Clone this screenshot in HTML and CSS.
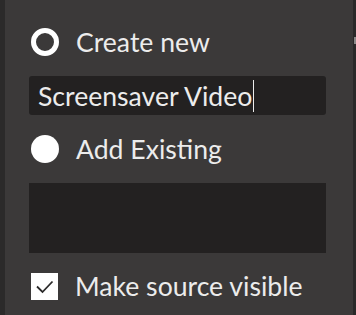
FILE: index.html
```html
<!DOCTYPE html>
<html>
<head>
<meta charset="utf-8">
<link rel="stylesheet" href="styles.css">
</head>
<body>
<div class="frame">
  <div class="edge-left"></div>
  <div class="panel">
    <label class="row row-create">
      <span class="radio radio-off"></span>
      <span class="label">Create new</span>
    </label>
    <div class="input"><span class="value">Screensaver Video</span><span class="caret"></span></div>
    <label class="row row-existing">
      <span class="radio radio-on"></span>
      <span class="label">Add Existing</span>
    </label>
    <div class="list"></div>
    <label class="row row-visible">
      <span class="check">
        <svg width="27" height="27" viewBox="0 0 27 27"><path d="M6 13.5 L11.5 19 L21.5 8.5" fill="none" stroke="#2b2a2a" stroke-width="1.8"/></svg>
      </span>
      <span class="label">Make source visible</span>
    </label>
  </div>
  <div class="edge-right"><span class="thumb"></span></div>
</div>
</body>
</html>
```
FILE: styles.css
```css
html, body {
  margin: 0;
  padding: 0;
  background: #3b3939;
}
.frame {
  display: flex;
  width: 356px;
  height: 315px;
  overflow: hidden;
  font-family: Lato, "Noto Sans", sans-serif;
  color: #ececec;
}
.edge-left {
  width: 5px;
  background: #2b2a2a;
  flex: none;
}
.edge-right {
  width: 3px;
  background: #2a2929;
  flex: none;
  position: relative;
}
.thumb {
  position: absolute;
  left: 1px;
  top: 37px;
  width: 2px;
  height: 7px;
  background: #8a8888;
}
.panel {
  flex: 1;
  padding-left: 24px;
  padding-right: 27px;
  display: flex;
  flex-direction: column;
}
.row {
  display: flex;
  align-items: center;
  height: 28px;
}
.row-create { margin-top: 28px; }
.row-existing { margin-top: 20px; }
.row-visible { margin-top: 19px; }
.label {
  margin-left: 17px;
  font-size: 26.6px;
  line-height: 28px;
  white-space: nowrap;
}
.radio {
  width: 28px;
  height: 28px;
  border-radius: 50%;
  box-sizing: border-box;
  margin-left: 2px;
  flex: none;
}
.radio-off {
  border: 5px solid #ffffff;
  background: #3b3939;
}
.radio-on {
  background: #ffffff;
}
.check {
  width: 27px;
  height: 27px;
  background: #ffffff;
  margin-left: 2px;
  flex: none;
  display: block;
}
.check svg { display: block; }
.input {
  margin-top: 20px;
  height: 39px;
  background: #232121;
  border-radius: 3px;
  display: flex;
  align-items: center;
  padding-left: 9px;
}
.value {
  font-size: 26.6px;
  line-height: 32px;
  white-space: nowrap;
}
.caret {
  width: 1px;
  height: 32px;
  background: #ececec;
  margin-left: 1px;
}
.list {
  margin-top: 20px;
  height: 70px;
  background: #232121;
}
```
